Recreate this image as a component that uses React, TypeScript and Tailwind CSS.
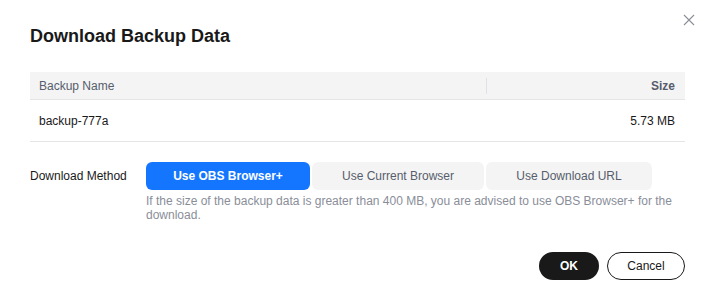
import { useState } from 'react'

const methods = ['Use OBS Browser+', 'Use Current Browser', 'Use Download URL']

export default function App() {
  const [method, setMethod] = useState(0)

  return (
    <div className="relative w-[711px] h-[306px] bg-white pl-[30px] pr-[26px] pt-[24px] font-['Liberation_Sans',Arial,sans-serif] text-[12px] text-[#191919]">
      <button className="absolute right-[16px] top-[14px] w-[12px] h-[12px] text-[#8a8e99]">
        <svg viewBox="0 0 12 12" width="12" height="12" fill="none" stroke="currentColor" strokeWidth="1.1">
          <path d="M1 1L11 11M11 1L1 11" />
        </svg>
      </button>

      <h2 className="text-[18px] leading-[24px] font-bold text-[#191919]">Download Backup Data</h2>

      <div className="mt-[24px]">
        <div className="flex items-center h-[28px] bg-[#f4f4f4] border-b border-[#e5e5e5] text-[#575d6c]">
          <div className="flex-1 pl-[9px] h-full flex items-center">Backup Name</div>
          <div className="w-px h-[16px] bg-[#dfe1e6]" />
          <div className="w-[198px] pr-[10px] text-right font-bold">Size</div>
        </div>
        <div className="flex items-center h-[42px] border-b border-[#e5e5e5]">
          <div className="flex-1 pl-[9px]">backup-777a</div>
          <div className="w-[198px] pr-[10px] text-right">5.73 MB</div>
        </div>
      </div>

      <div className="flex mt-[20px]">
        <div className="w-[116px] h-[28px] flex items-center text-[#191919]">Download Method</div>
        <div className="flex flex-col">
          <div className="flex gap-[2px]">
            {methods.map((m, i) => (
              <button
                key={m}
                onClick={() => setMethod(i)}
                className={
                  i === method
                    ? 'h-[28px] w-[164px] rounded-[6px] bg-[#1476ff] text-white font-bold'
                    : i === 1
                      ? 'h-[28px] w-[172px] rounded-[6px] bg-[#f4f4f4] text-[#575d6c]'
                      : 'h-[28px] w-[166px] rounded-[6px] bg-[#f4f4f4] text-[#575d6c]'
                }
              >
                {m}
              </button>
            ))}
          </div>
          <p className="mt-[4px] w-[530px] leading-[14px] text-[#8a8e99]">
            If the size of the backup data is greater than 400 MB, you are advised to use OBS Browser+ for the download.
          </p>
        </div>
      </div>

      <div className="flex justify-end gap-[8px] mt-[30px]">
        <button className="h-[28px] w-[60px] rounded-full bg-[#191919] text-white font-bold">OK</button>
        <button className="h-[28px] w-[78px] rounded-full border border-[#191919] text-[#191919]">Cancel</button>
      </div>
    </div>
  )
}
